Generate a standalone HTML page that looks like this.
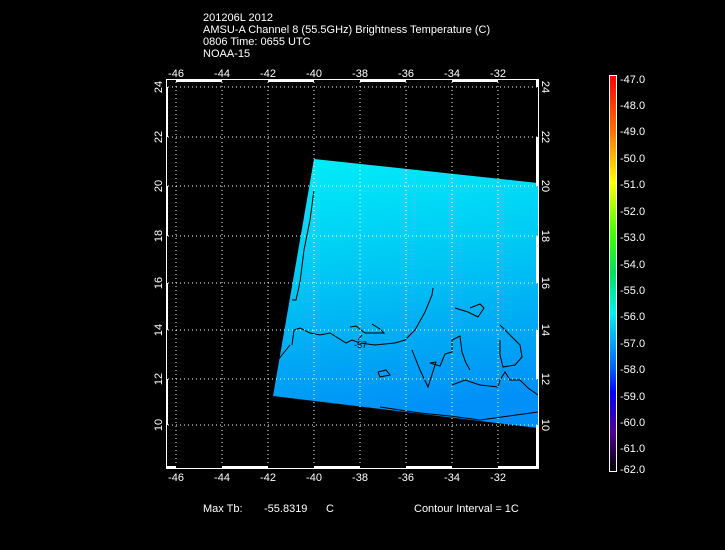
<!DOCTYPE html>
<html><head><meta charset="utf-8"><style>
html,body{margin:0;padding:0;background:#000;}
svg{display:block;}
text{font-family:"Liberation Sans",sans-serif;fill:#fff;font-size:11px;}
</style></head><body>
<svg width="725" height="550" viewBox="0 0 725 550" xmlns="http://www.w3.org/2000/svg">
<defs>
<linearGradient id="dg" x1="0" y1="0" x2="0.15" y2="1">
<stop offset="0" stop-color="#00eef8"/>
<stop offset="0.45" stop-color="#00c8f4"/>
<stop offset="0.75" stop-color="#00a8f4"/>
<stop offset="1" stop-color="#0090f8"/>
</linearGradient>
<linearGradient id="cb" x1="0" y1="0" x2="0" y2="1">
<stop offset="0" stop-color="#ff0000"/>
<stop offset="0.14" stop-color="#ff7000"/>
<stop offset="0.27" stop-color="#ffff00"/>
<stop offset="0.4" stop-color="#40ff00"/>
<stop offset="0.5" stop-color="#00e060"/>
<stop offset="0.6" stop-color="#00f0f0"/>
<stop offset="0.74" stop-color="#0060ff"/>
<stop offset="0.8" stop-color="#0000ff"/>
<stop offset="0.9" stop-color="#500090"/>
<stop offset="1" stop-color="#000000"/>
</linearGradient>
</defs>
<text x="203" y="21">201206L 2012</text>
<text x="203" y="33">AMSU-A Channel 8 (55.5GHz) Brightness Temperature (C)</text>
<text x="203" y="45">0806 Time: 0655 UTC</text>
<text x="203" y="57">NOAA-15</text>

<polygon points="314,159 538,183 538,428 273,396" fill="url(#dg)"/>

<g stroke="#000" stroke-width="1" fill="none">
<polyline points="314,190 310,220 304,250 300,282 296,300 292,300"/>
<polyline points="292,345 294,330 300,328 310,333 320,335 330,333 338,338 346,343 352,340 360,343 375,345 395,343 405,340 415,330 425,312 432,295 433,288"/>
<polyline points="350,327 356,326 365,333 384,333 380,329 372,324"/>
<polyline points="278,360 290,345"/>
<polyline points="412,350 420,370 428,387 436,362 430,363 440,366 445,354 452,352 452,340 460,336 462,352 466,363 470,370"/>
<polyline points="455,308 468,312 478,317 484,308 480,304 470,308"/>
<polyline points="452,385 465,380 480,385 498,387 500,380 505,372 510,380 520,380 528,388 538,395"/>
<polyline points="500,325 510,335 520,345 522,357 515,365 503,367 500,355 500,340"/>
<polyline points="380,407 400,410 420,413 450,416 480,420 538,412"/>
<polyline points="378,372 386,370 390,375 380,377 378,372"/>
<polyline points="358,340 362,335"/>
</g>
<text x="354" y="348" style="font-size:9px;fill:#000">-57</text>

<g stroke="#fff" stroke-width="1" stroke-dasharray="1,3">
<line x1="176" y1="82" x2="176" y2="466"/><line x1="222" y1="82" x2="222" y2="466"/>
<line x1="268" y1="82" x2="268" y2="466"/><line x1="314" y1="82" x2="314" y2="466"/>
<line x1="360" y1="82" x2="360" y2="466"/><line x1="406" y1="82" x2="406" y2="466"/>
<line x1="452" y1="82" x2="452" y2="466"/><line x1="498" y1="82" x2="498" y2="466"/>
<line x1="168" y1="87" x2="537" y2="87"/><line x1="168" y1="137" x2="537" y2="137"/>
<line x1="168" y1="186" x2="537" y2="186"/><line x1="168" y1="236" x2="537" y2="236"/>
<line x1="168" y1="283" x2="537" y2="283"/><line x1="168" y1="330" x2="537" y2="330"/>
<line x1="168" y1="379" x2="537" y2="379"/><line x1="168" y1="425" x2="537" y2="425"/>
</g>
<rect x="166.5" y="79.5" width="372" height="389" fill="none" stroke="#fff" stroke-width="1"/>
<g fill="#fff">
<rect x="176" y="80" width="46" height="2"/><rect x="268" y="80" width="46" height="2"/><rect x="360" y="80" width="46" height="2"/><rect x="452" y="80" width="46" height="2"/>
<rect x="166" y="466" width="10" height="3"/><rect x="222" y="466" width="46" height="3"/><rect x="314" y="466" width="46" height="3"/><rect x="406" y="466" width="46" height="3"/><rect x="498" y="466" width="41" height="3"/>
<rect x="166" y="87" width="2" height="50"/><rect x="166" y="186" width="2" height="50"/><rect x="166" y="283" width="2" height="47"/><rect x="166" y="379" width="2" height="46"/>
<rect x="536" y="80" width="2" height="7"/><rect x="536" y="137" width="2" height="49"/><rect x="536" y="236" width="2" height="47"/><rect x="536" y="330" width="2" height="49"/><rect x="536" y="425" width="2" height="43"/>
</g>
<g text-anchor="middle">
<text x="176" y="77">-46</text><text x="222" y="77">-44</text><text x="268" y="77">-42</text><text x="314" y="77">-40</text><text x="360" y="77">-38</text><text x="406" y="77">-36</text><text x="452" y="77">-34</text><text x="498" y="77">-32</text>
<text x="176" y="481">-46</text><text x="222" y="481">-44</text><text x="268" y="481">-42</text><text x="314" y="481">-40</text><text x="360" y="481">-38</text><text x="406" y="481">-36</text><text x="452" y="481">-34</text><text x="498" y="481">-32</text>
</g>
<g text-anchor="middle">
<text transform="translate(162,87) rotate(-90)">24</text><text transform="translate(162,137) rotate(-90)">22</text><text transform="translate(162,186) rotate(-90)">20</text><text transform="translate(162,236) rotate(-90)">18</text><text transform="translate(162,283) rotate(-90)">16</text><text transform="translate(162,330) rotate(-90)">14</text><text transform="translate(162,379) rotate(-90)">12</text><text transform="translate(162,425) rotate(-90)">10</text>
<text transform="translate(542,87) rotate(90)">24</text><text transform="translate(542,137) rotate(90)">22</text><text transform="translate(542,186) rotate(90)">20</text><text transform="translate(542,236) rotate(90)">18</text><text transform="translate(542,283) rotate(90)">16</text><text transform="translate(542,330) rotate(90)">14</text><text transform="translate(542,379) rotate(90)">12</text><text transform="translate(542,425) rotate(90)">10</text>
</g>

<rect x="609.5" y="75.5" width="7" height="396" fill="url(#cb)" stroke="#fff" stroke-width="1"/>
<g>
<text x="620" y="83">-47.0</text><text x="620" y="109">-48.0</text><text x="620" y="135">-49.0</text><text x="620" y="162">-50.0</text><text x="620" y="188">-51.0</text><text x="620" y="215">-52.0</text><text x="620" y="241">-53.0</text><text x="620" y="268">-54.0</text><text x="620" y="294">-55.0</text><text x="620" y="320">-56.0</text><text x="620" y="347">-57.0</text><text x="620" y="373">-58.0</text><text x="620" y="400">-59.0</text><text x="620" y="426">-60.0</text><text x="620" y="452">-61.0</text><text x="620" y="473">-62.0</text>
</g>

<text x="203" y="512">Max Tb:</text>
<text x="264" y="512">-55.8319</text>
<text x="326" y="512">C</text>
<text x="414" y="512">Contour Interval = 1C</text>
</svg>
</body></html>
